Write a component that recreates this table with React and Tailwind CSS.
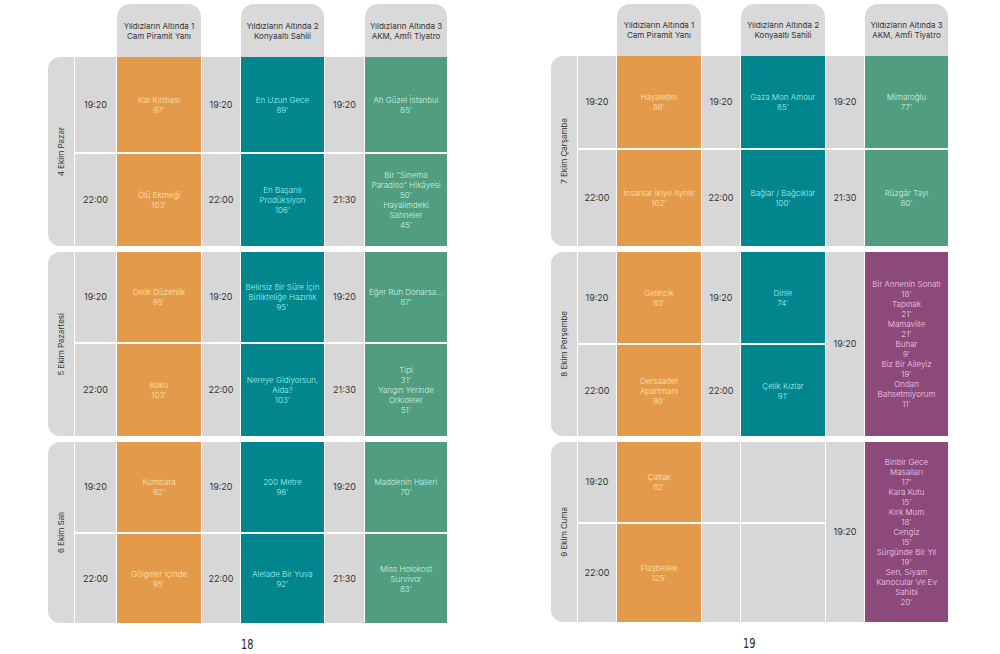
const tone = {
  o: "bg-[#e39b4b] text-[#fde5b5]",
  t: "bg-[#00868c] text-[#a6f2f0]",
  g: "bg-[#509d80] text-[#d5f3e3]",
  p: "bg-[#8b4a7a] text-[#f7cdea]",
  e: "bg-[#d7d7d7]",
};

const timeCols = ["col-start-2", "col-start-4", "col-start-6"];
const venueCols = ["col-start-3", "col-start-5", "col-start-7"];
const rowStarts = ["row-start-1", "row-start-2"];

const leftPage = {
  cols: "grid-cols-[26px_41px_84px_38px_83px_39px_82px]",
  width: "w-[399px] ml-[48px]",
  headerH: "h-[53px]",
  number: "18",
  days: [
    {
      label: "4 Ekim Pazar",
      rows: "grid-rows-[95px_92px]",
      slots: [
        { c: "o", items: [{ time: "19:20", lines: ["Kar Kırması", "97'"] }, { time: "22:00", lines: ["Ölü Ekmeği", "103'"] }] },
        { c: "t", items: [{ time: "19:20", lines: ["En Uzun Gece", "89'"] }, { time: "22:00", lines: ["En Başarılı", "Prodüksiyon", "106'"] }] },
        {
          c: "g",
          items: [
            { time: "19:20", lines: ["Ah Güzel İstanbul", "85'"] },
            { time: "21:30", lines: ["Bir \"Sinema", "Paradiso\" Hikâyesi", "50'", "Hayalimdeki", "Sahneler", "45'"] },
          ],
        },
      ],
    },
    {
      label: "5 Ekim Pazartesi",
      rows: "grid-rows-[90px_92px]",
      slots: [
        { c: "o", items: [{ time: "19:20", lines: ["Delik Düzenlik", "95'"] }, { time: "22:00", lines: ["Koku", "103'"] }] },
        {
          c: "t",
          items: [
            { time: "19:20", lines: ["Belirsiz Bir Süre İçin", "Birlikteliğe Hazırlık", "95'"] },
            { time: "22:00", lines: ["Nereye Gidiyorsun,", "Aida?", "103'"] },
          ],
        },
        {
          c: "g",
          items: [
            { time: "19:20", lines: ["Eğer Ruh Donarsa...", "87'"] },
            { time: "21:30", lines: ["Tipi", "31'", "Yangın Yerinde", "Orkideler", "51'"] },
          ],
        },
      ],
    },
    {
      label: "6 Ekim Salı",
      rows: "grid-rows-[90px_89px]",
      slots: [
        { c: "o", items: [{ time: "19:20", lines: ["Kumbara", "92'"] }, { time: "22:00", lines: ["Gölgeler İçinde", "95'"] }] },
        { c: "t", items: [{ time: "19:20", lines: ["200 Metre", "96'"] }, { time: "22:00", lines: ["Alelade Bir Yuva", "92'"] }] },
        { c: "g", items: [{ time: "19:20", lines: ["Maddenin Halleri", "70'"] }, { time: "21:30", lines: ["Miss Holokost", "Survivor", "83'"] }] },
      ],
    },
  ],
};

const rightPage = {
  cols: "grid-cols-[26px_38px_84px_38px_84px_38px_83px]",
  width: "w-[397px] ml-[104px]",
  headerH: "h-[52px]",
  number: "19",
  days: [
    {
      label: "7 Ekim Çarşamba",
      rows: "grid-rows-[92px_96px]",
      slots: [
        { c: "o", items: [{ time: "19:20", lines: ["Hayaletler", "86'"] }, { time: "22:00", lines: ["İnsanlar İkiye Ayrılır", "102'"] }] },
        { c: "t", items: [{ time: "19:20", lines: ["Gaza Mon Amour", "85'"] }, { time: "22:00", lines: ["Bağlar / Bağcıklar", "100'"] }] },
        { c: "g", items: [{ time: "19:20", lines: ["Mimaroğlu", "77'"] }, { time: "21:30", lines: ["Rüzgâr Tayı", "80'"] }] },
      ],
    },
    {
      label: "8 Ekim Perşembe",
      rows: "grid-rows-[91px_91px]",
      slots: [
        { c: "o", items: [{ time: "19:20", lines: ["Gelincik", "83'"] }, { time: "22:00", lines: ["Dersaadet", "Apartmanı", "90'"] }] },
        { c: "t", items: [{ time: "19:20", lines: ["Dinle", "74'"] }, { time: "22:00", lines: ["Çelik Kızlar", "91'"] }] },
        {
          c: "p",
          span: { time: "19:20", lines: ["Bir Annenin Sonatı", "18'", "Tapınak", "21'", "Mamaville", "21'", "Buhar", "9'", "Biz Bir Aileyiz", "19'", "Ondan", "Bahsetmiyorum", "11'"] },
        },
      ],
    },
    {
      label: "9 Ekim Cuma",
      rows: "grid-rows-[80px_98px]",
      slots: [
        { c: "o", items: [{ time: "19:20", lines: ["Çatlak", "82'"] }, { time: "22:00", lines: ["Flaşbellek", "125'"] }] },
        { c: "e", items: [{ time: "", lines: [] }, { time: "", lines: [] }] },
        {
          c: "p",
          span: {
            time: "19:20",
            lines: ["Binbir Gece", "Masalları", "17'", "Kara Kutu", "15'", "Kırk Mum", "18'", "Cengiz", "15'", "Sürgünde Bir Yıl", "19'", "Sen, Siyam", "Kanocular Ve Ev", "Sahibi", "20'"],
          },
        },
      ],
    },
  ],
};

const venues = [
  ["Yıldızların Altında 1", "Cam Piramit Yanı"],
  ["Yıldızların Altında 2", "Konyaaltı Sahili"],
  ["Yıldızların Altında 3", "AKM, Amfi Tiyatro"],
];

const TimeCell = ({ time, className }) => (
  <div className={`${className} bg-[#d7d7d7] flex items-center justify-center text-[9px] text-[#333]`}>{time}</div>
);

const FilmCell = ({ lines, c, className }) => (
  <div className={`${className} ${tone[c]} flex flex-col items-center justify-center px-1 text-center text-[8px] leading-[10px] font-light`}>
    {lines.map((l, i) => (
      <span key={i} className="whitespace-nowrap">
        {l}
      </span>
    ))}
  </div>
);

const Day = ({ day, cols }) => (
  <div className={`grid ${cols} ${day.rows} gap-x-px gap-y-[2px] bg-white`}>
    <div className="row-span-2 col-start-1 row-start-1 bg-[#d9d9d9] rounded-l-[12px] flex items-center justify-center">
      <span className="[writing-mode:vertical-rl] rotate-180 whitespace-nowrap text-[8px] text-[#333]">{day.label}</span>
    </div>
    {day.slots.map((s, v) =>
      s.span ? (
        <div key={v} className="contents">
          <TimeCell time={s.span.time} className={`${timeCols[v]} row-start-1 row-span-2`} />
          <FilmCell lines={s.span.lines} c={s.c} className={`${venueCols[v]} row-start-1 row-span-2`} />
        </div>
      ) : (
        s.items.map((it, r) => (
          <div key={`${v}-${r}`} className="contents">
            <TimeCell time={it.time} className={`${timeCols[v]} ${rowStarts[r]}`} />
            <FilmCell lines={it.lines} c={s.c} className={`${venueCols[v]} ${rowStarts[r]}`} />
          </div>
        ))
      )
    )}
  </div>
);

const Page = ({ page }) => (
  <div className={`${page.width} flex flex-col`}>
    <div className={`grid ${page.cols} gap-x-px mt-[4px] ${page.headerH}`}>
      {venues.map((v, i) => (
        <div
          key={i}
          className={`${venueCols[i]} bg-[#d9d9d9] rounded-t-[13px] flex flex-col items-center justify-center text-[8px] leading-[10px] text-[#333]`}
        >
          <span>{v[0]}</span>
          <span>{v[1]}</span>
        </div>
      ))}
    </div>
    <div className="flex flex-col gap-[6px]">
      {page.days.map((d, i) => (
        <Day key={i} day={d} cols={page.cols} />
      ))}
    </div>
    <div className="mt-[15px] flex justify-center">
      <span className="inline-block scale-x-75 scale-y-110 text-[13px] leading-[14px] text-[#222] font-['DejaVu_Sans',sans-serif]">
        {page.number}
      </span>
    </div>
  </div>
);

export default function App() {
  return (
    <div className="w-[1000px] h-[654px] bg-white flex font-['Inter',sans-serif] overflow-hidden">
      <Page page={leftPage} />
      <Page page={rightPage} />
    </div>
  );
}
